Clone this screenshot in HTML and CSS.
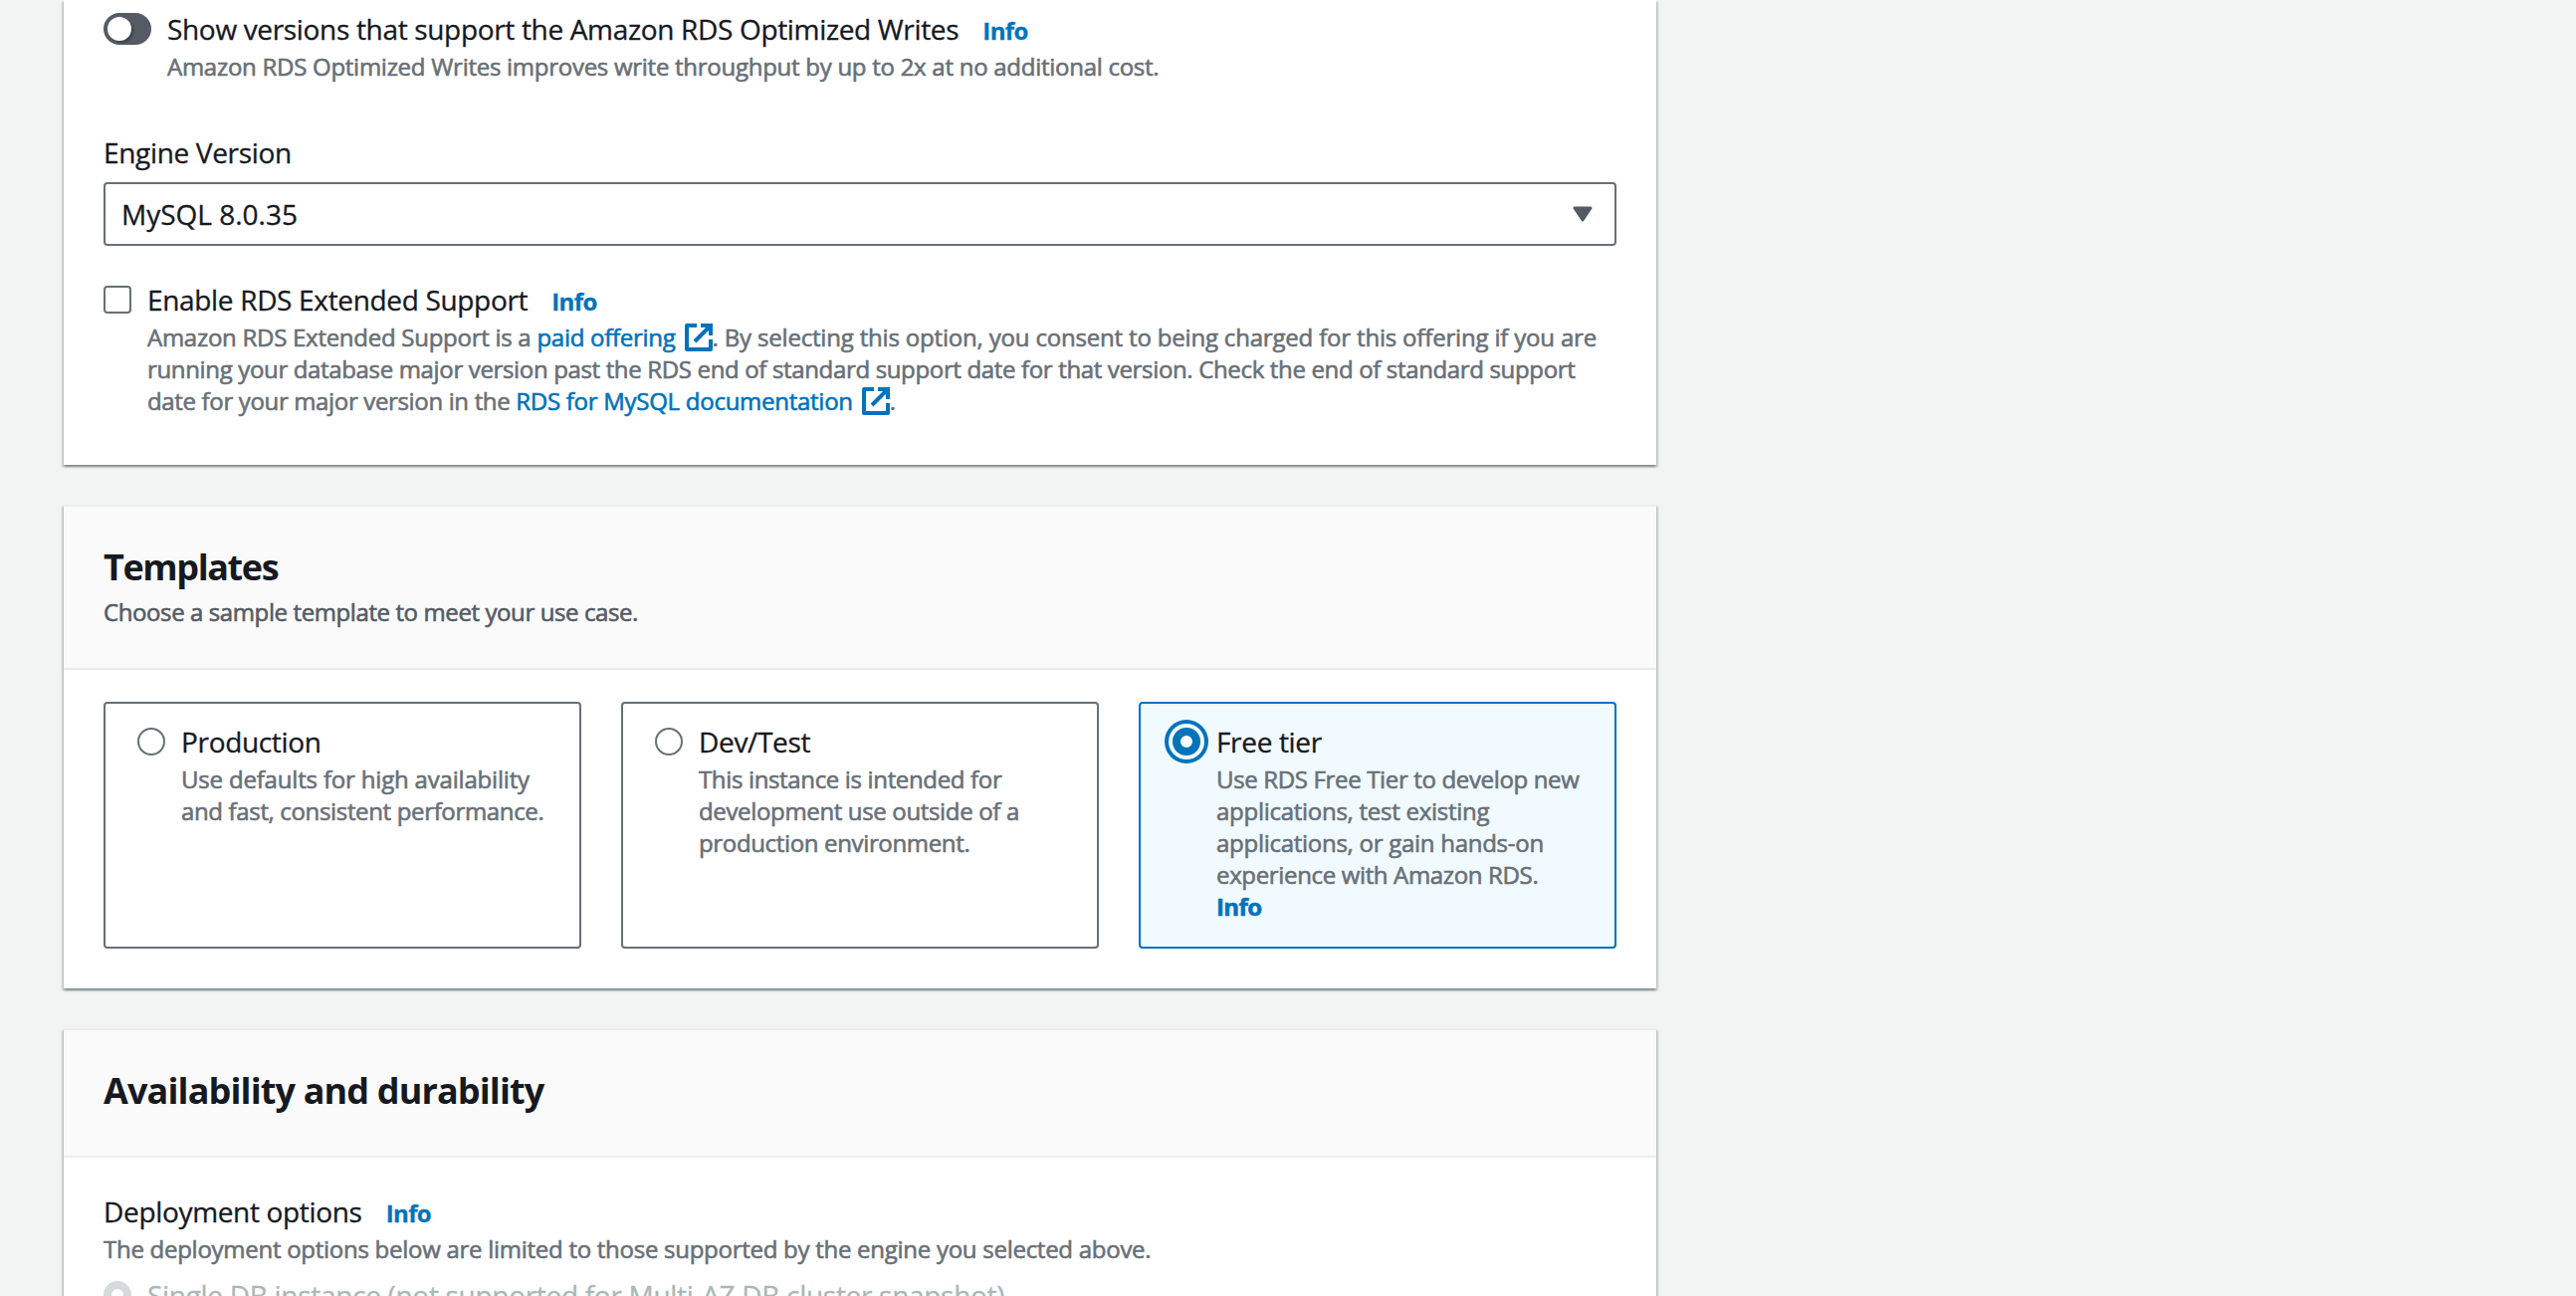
FILE: index.html
```html
<!DOCTYPE html>
<html lang="en">
<head>
<meta charset="utf-8">
<title>Create database</title>
<link rel="stylesheet" href="styles.css">
</head>
<body>
<svg class="defs" aria-hidden="true">
  <symbol id="external" viewBox="0 0 28 28">
    <path d="M12 2H2v24h24V16" fill="none" stroke="currentColor" stroke-width="4" stroke-linejoin="round"/>
    <path d="M16 2h10v10M25 3 10 18" fill="none" stroke="currentColor" stroke-width="4"/>
  </symbol>
</svg>
<main class="page">
  <section class="card card-first">
    <div class="option">
      <span class="toggle"><span class="knob"></span></span>
      <div>
        <div class="label">Show versions that support the Amazon RDS Optimized Writes<a class="info">Info</a></div>
        <div class="desc">Amazon RDS Optimized Writes improves write throughput by up to 2x at no additional cost.</div>
      </div>
    </div>
    <div class="field">
      <div class="label">Engine Version</div>
      <div class="select">
        <span>MySQL 8.0.35</span>
        <svg class="caret" viewBox="0 0 20 16"><path d="M2 2h16l-8 12z" fill="currentColor" stroke="currentColor" stroke-width="3" stroke-linejoin="round"/></svg>
      </div>
    </div>
    <div class="option">
      <span class="checkbox"></span>
      <div>
        <div class="label">Enable RDS Extended Support<a class="info">Info</a></div>
        <div class="desc">Amazon RDS Extended Support is a <a class="link">paid offering <svg class="ext"><use href="#external"/></svg></a><span class="loose">. By selecting this option, you consent to being charged for this offering if you are</span><br><span class="tight">running your database major version past the RDS end of standard support date for that version. Check the end of standard support</span><br><span class="tight">date for your major version in the </span><a class="link">RDS for MySQL documentation <svg class="ext"><use href="#external"/></svg></a>.</div>
      </div>
    </div>
  </section>

  <section class="card">
    <header class="card-header">
      <h2 class="short">Templates</h2>
      <p class="desc subtitle">Choose a sample template to meet your use case.</p>
    </header>
    <div class="tiles">
      <div class="tile">
        <span class="radio"></span>
        <div>
          <div class="label">Production</div>
          <div class="desc"><span class="loose">Use defaults for high availability</span><br><span class="tight">and fast, consistent performance.</span></div>
        </div>
      </div>
      <div class="tile">
        <span class="radio"></span>
        <div>
          <div class="label">Dev/Test</div>
          <div class="desc tight">This instance is intended for<br>development use outside of a<br>production environment.</div>
        </div>
      </div>
      <div class="tile selected">
        <span class="radio checked"></span>
        <div>
          <div class="label">Free tier</div>
          <div class="desc"><span class="tight">Use RDS Free Tier to develop new</span><br>applications, test existing<br>applications, or gain hands-on<br><span class="tight">experience with Amazon RDS.</span><br><a class="info">Info</a></div>
        </div>
      </div>
    </div>
  </section>

  <section class="card card-last">
    <header class="card-header card-header-plain">
      <h2>Availability and durability</h2>
    </header>
    <div class="card-body">
      <div class="label">Deployment options<a class="info">Info</a></div>
      <div class="desc">The deployment options below are limited to those supported by the engine you selected above.</div>
      <div class="option option-disabled">
        <span class="radio disabled"></span>
        <div class="label">Single DB instance (not supported for Multi-AZ DB cluster snapshot)</div>
      </div>
    </div>
  </section>
</main>
</body>
</html>
```
FILE: styles.css
```css
* { box-sizing: border-box; }

body {
  height: 1302px;
  margin: 0;
  overflow: hidden;
  background: #f2f3f3;
  color: #16191f;
  font-family: "Open Sans", "Noto Sans", sans-serif;
  font-size: 28px;
  line-height: 44px;
}

.defs { display: none; }

.page {
  display: flex;
  flex-direction: column;
  gap: 40px;
  width: 1600px;
  height: 1302px;
  margin-left: 64px;
}

.card {
  flex: none;
  border-top: 2px solid #eaeded;
  background: #fff;
  box-shadow:
    0 2px 2px 0 rgba(0, 28, 36, 0.3),
    2px 2px 2px 0 rgba(0, 28, 36, 0.15),
    -2px 2px 2px 0 rgba(0, 28, 36, 0.15);
}

.card-first {
  border-top: 0;
  padding: 7px 40px 48px;
}

.card-last {
  flex: 1 1 0;
  min-height: 0;
}

.card-header {
  padding: 39px 40px 40px;
  border-bottom: 2px solid #eaeded;
  background: #fafafa;
}

.card-header-plain { padding-bottom: 43px; }

h2 {
  margin: 0;
  font-size: 36px;
  font-weight: 700;
  line-height: 44px;
  letter-spacing: -0.87px;
}

h2.short { letter-spacing: -1.4px; }

.label {
  letter-spacing: -0.33px;
  white-space: nowrap;
  -webkit-text-stroke: 0.3px currentColor;
}

.desc {
  margin: 0;
  color: #687078;
  font-size: 24px;
  line-height: 32px;
  letter-spacing: -0.27px;
  white-space: nowrap;
  -webkit-text-stroke: 0.6px currentColor;
}

.loose { letter-spacing: -0.18px; }
.tight { letter-spacing: -0.345px; }

.subtitle {
  margin-top: 7px;
  color: #545b64;
  letter-spacing: -0.4px;
}

.info {
  color: #0073bb;
  font-size: 24px;
  font-weight: 700;
  line-height: 1;
  letter-spacing: -0.6px;
}

.label .info { margin-left: 24px; }

.link { color: #0073bb; }

.ext {
  width: 28px;
  height: 28px;
  margin-left: 3px;
  vertical-align: -5px;
}

.option {
  display: flex;
  gap: 16px;
}

.field { margin: 48px 0 32px; }

.toggle {
  flex: none;
  width: 48px;
  height: 32px;
  margin-top: 6px;
  padding: 4px;
  border-radius: 16px;
  background: #545b64;
}

.knob {
  display: block;
  width: 24px;
  height: 24px;
  border-radius: 50%;
  background: #fff;
  box-shadow: 2px 2px 2px rgba(0, 0, 0, 0.25);
}

.checkbox {
  flex: none;
  width: 28px;
  height: 28px;
  margin-top: 8px;
  border: 2px solid #687078;
  border-radius: 4px;
}

.select {
  display: flex;
  align-items: center;
  justify-content: space-between;
  height: 64px;
  margin-top: 8px;
  padding: 0 22px 0 16px;
  border: 2px solid #687078;
  border-radius: 4px;
  -webkit-text-stroke: 0.3px currentColor;
}

.caret {
  width: 20px;
  height: 16px;
  color: #545b64;
}

.tiles {
  display: grid;
  grid-template-columns: repeat(3, 1fr);
  gap: 40px;
  padding: 32px 40px 40px;
}

.tile {
  display: flex;
  gap: 16px;
  padding: 16px 24px 24px 32px;
  border: 2px solid #687078;
  border-radius: 4px;
}

.tile.selected {
  border-color: #0073bb;
  background: #f1faff;
}

.radio {
  flex: none;
  width: 28px;
  height: 28px;
  margin-top: 8px;
  border: 2px solid #687078;
  border-radius: 50%;
  background: #fff;
}

.radio.checked {
  border: 8px solid #0073bb;
  box-shadow: 0 0 0 4px #f1faff, 0 0 0 8px #0073bb;
}

.radio.disabled { border: 8px solid #d5dbdb; }

.card-body { padding: 32px 40px; }

.option-disabled {
  margin-top: 8px;
  color: #aab7b8;
}

.option-disabled .label { letter-spacing: -0.3px; }
```
